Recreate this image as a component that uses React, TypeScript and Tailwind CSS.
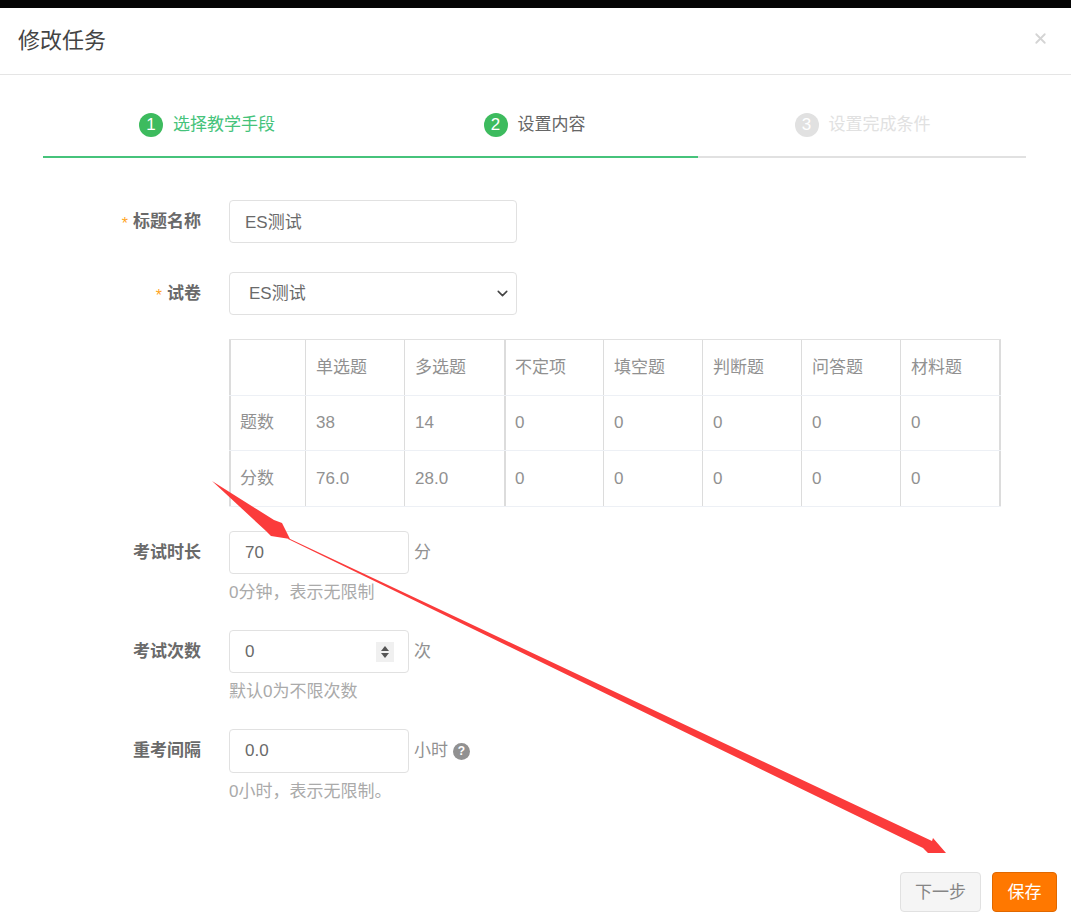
import { ChevronDown, X } from 'lucide-react'

const font = { fontFamily: '"Liberation Sans", "Noto Sans CJK SC", sans-serif' }

const headers = ['', '单选题', '多选题', '不定项', '填空题', '判断题', '问答题', '材料题']
const rows = [
  ['题数', '38', '14', '0', '0', '0', '0', '0'],
  ['分数', '76.0', '28.0', '0', '0', '0', '0', '0'],
]
const colWidths = ['w-[76px]', 'w-[99px]', 'w-[100px]', 'w-[99px]', 'w-[99px]', 'w-[99px]', 'w-[99px]', 'w-[101px]']

function Step({ n, label, state, first }: { n: number; label: string; state: 'done' | 'active' | 'todo'; first?: boolean }) {
  const circle = state === 'todo' ? 'bg-[#e1e1e1]' : 'bg-[#3dbb5e]'
  const text = state === 'done' ? 'text-[#46c37b]' : state === 'active' ? 'text-[#666]' : 'text-[#e1e1e1]'
  const line = state === 'todo' ? 'border-[#e1e1e1]' : 'border-[#46c37b]'
  return (
    <div className={`flex h-[83px] items-center justify-center border-b-2 pl-[1px] pt-[19px] ${first ? 'w-[327px]' : 'w-[328px]'} ${line}`}>
      <span className={`mr-[10px] flex h-6 w-6 items-center justify-center rounded-full text-[17px] text-white ${circle}`}>
        {n}
      </span>
      <span className={`text-[17px] ${text}`}>{label}</span>
    </div>
  )
}

function Label({ text, required }: { text: string; required?: boolean }) {
  return (
    <div className="flex h-[42px] w-[201px] shrink-0 items-center justify-end pt-[2px] text-[17px] font-bold text-[#6a6a6a]">
      {required && <span className="mr-[5px] mt-1 text-base font-normal text-[#ffa51f]">*</span>}
      {text}
    </div>
  )
}

function Field({ value, wide, tall, spinner }: { value: string; wide?: boolean; tall?: boolean; spinner?: boolean }) {
  return (
    <div
      className={`flex items-center justify-between rounded border border-[#e1e1e1] bg-white pl-[15px] text-[17px] text-[#6a6a6a] ${wide ? 'w-[288px] pt-[2px]' : 'w-[180px]'} ${tall ? 'h-[44px]' : 'h-[43px]'}`}
    >
      {value}
      {spinner && (
        <span className="mr-[14px] flex h-5 w-[18px] flex-col items-center justify-center gap-[2px] bg-[#f0f0f0]">
          <span className="h-0 w-0 border-x-[4px] border-b-[5px] border-x-transparent border-b-[#555]" />
          <span className="h-0 w-0 border-x-[4px] border-t-[5px] border-x-transparent border-t-[#555]" />
        </span>
      )}
    </div>
  )
}

function Cell({ index, text }: { index: number; text: string }) {
  const left = index === 0 || index === 3 ? 'border-l-2 pl-[9px]' : 'border-l pl-[10px]'
  const right = index === 7 ? 'border-r-2' : ''
  return <div className={`flex items-center border-[#dcdcdc] ${left} ${right} ${colWidths[index]}`}>{text}</div>
}

export default function App() {
  return (
    <div style={font} className="relative h-[914px] w-[1071px] overflow-hidden bg-white text-[#919191]">
      <div className="h-2 bg-[#050505]" />

      <div className="flex h-[67px] items-center justify-between border-b border-[#e5e5e5] pl-[18px] pr-[22px]">
        <h4 className="text-[22px] leading-none text-[#444]">修改任务</h4>
        <X size={17} strokeWidth={2.5} className="mb-[6px] text-[#d4d4d4]" />
      </div>

      <div className="ml-[43px] flex">
        <Step n={1} label="选择教学手段" state="done" first />
        <Step n={2} label="设置内容" state="active" />
        <Step n={3} label="设置完成条件" state="todo" />
      </div>

      <div className="mt-[42px] flex items-start gap-7">
        <Label text="标题名称" required />
        <Field value="ES测试" wide />
      </div>

      <div className="mt-[29px] flex items-start gap-7">
        <Label text="试卷" required />
        <div className="flex h-[43px] w-[288px] items-center justify-between rounded border border-[#e1e1e1] pl-[19px] pr-[5px] text-[17px] text-[#6a6a6a]">
          <span className="pt-[1px]">ES测试</span>
          <ChevronDown size={17} strokeWidth={2.2} className="text-[#444]" />
        </div>
      </div>

      <div className="ml-[229px] mt-6 w-[772px] border-y border-t-[#e1e1e1] border-b-[#edf0f5] text-[17px]">
        <div className="flex h-[56px] border-b border-[#edf0f5]">
          {headers.map((h, i) => (
            <Cell key={i} index={i} text={h} />
          ))}
        </div>
        {rows.map((row, r) => (
          <div key={r} className={`flex ${r === 0 ? 'h-[55px] border-b border-[#edf0f5]' : 'h-[55px]'}`}>
            {row.map((c, i) => (
              <Cell key={i} index={i} text={c} />
            ))}
          </div>
        ))}
      </div>

      <div className="mt-6 flex items-start gap-7">
        <Label text="考试时长" />
        <div>
          <div className="flex items-center gap-[5px] text-[17px]">
            <Field value="70" />分
          </div>
          <p className="mt-2 text-[17px] leading-[22px] text-[#aaa]">0分钟，表示无限制</p>
        </div>
      </div>

      <div className="mt-[26px] flex items-start gap-7">
        <Label text="考试次数" />
        <div>
          <div className="flex items-center gap-[5px] text-[17px]">
            <Field value="0" spinner />次
          </div>
          <p className="mt-2 text-[17px] leading-[22px] text-[#aaa]">默认0为不限次数</p>
        </div>
      </div>

      <div className="mt-[26px] flex items-start gap-7">
        <Label text="重考间隔" />
        <div>
          <div className="flex items-center gap-[5px] text-[17px]">
            <Field value="0.0" tall />
            小时
            <span className="flex h-[17px] w-[17px] items-center justify-center rounded-full bg-[#919191] text-xs font-bold text-white">
              ?
            </span>
          </div>
          <p className="mt-2 text-[17px] leading-[22px] text-[#aaa]">0小时，表示无限制。</p>
        </div>
      </div>

      <div className="absolute bottom-[2px] right-[14px] flex gap-[11px] text-[17px]">
        <button className="h-10 w-[81px] rounded border border-[#e1e1e1] bg-[#f5f5f5] pt-[2px] text-[#858585]">下一步</button>
        <button className="h-10 w-[65px] rounded border border-[#e06800] bg-[#ff7800] pt-[2px] text-white">保存</button>
      </div>

      {/* annotation arrows drawn over the form */}
      <svg className="pointer-events-none absolute left-0 top-0" width="1071" height="914">
        <polygon points="212,481 274,520 282,523 290,539 271,536 266,531" fill="#fb3b3b" />
        <polygon points="288,538 932,841 933,838 946,853 928,853 923,848 288,539" fill="#fb3b3b" />
      </svg>
    </div>
  )
}
